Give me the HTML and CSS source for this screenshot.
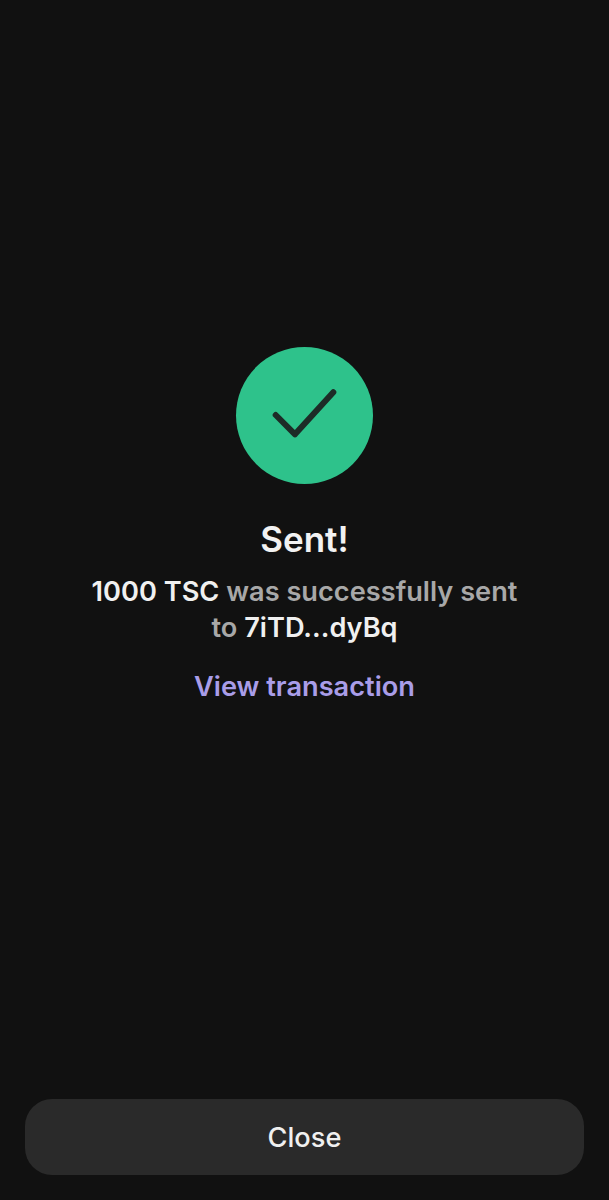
FILE: index.html
```html
<!DOCTYPE html>
<html lang="en">
<head>
  <meta charset="UTF-8">
  <title>Sent</title>
  <link rel="stylesheet" href="styles.css">
</head>
<body>
  <main class="screen">
    <section class="result">
      <div class="result-icon">
        <svg width="137" height="137" viewBox="0 0 137 137" fill="none">
          <path d="M39.7 68 L59 87.3 L97.3 45.3" stroke="#1d2b27" stroke-width="6" stroke-linecap="round" stroke-linejoin="round"/>
        </svg>
      </div>
      <h1 class="result-title">Sent!</h1>
      <p class="result-text"><b>1000 TSC</b> was successfully sent<br>to <b>7iTD...dyBq</b></p>
      <a class="result-link" href="#">View transaction</a>
    </section>
    <button class="close-btn" type="button">Close</button>
  </main>
</body>
</html>
```

FILE: styles.css
```css
* { box-sizing: border-box; }
html, body { margin: 0; height: 100%; }
body { background-color: #111111; font-family: Inter, "Noto Sans", sans-serif; }

.screen { height: 1200px; display: flex; flex-direction: column; justify-content: space-between; padding: 347px 25px 25px; }

.result { display: flex; flex-direction: column; align-items: center; text-align: center; }
.result-icon { width: 137px; height: 137px; border-radius: 50%; background-color: #2ec28b; }
.result-icon svg { display: block; }
.result-title { margin: 33px 0 0; font-size: 35px; line-height: 44px; font-weight: 600; color: #f2f2f2; }
.result-text { margin: 13px 0 0; font-size: 27.2px; line-height: 36px; font-weight: 600; color: #a8a8a8; }
.result-text b { font-weight: 600; color: #f0f0f0; }
.result-link { margin-top: 23px; font-size: 27.2px; line-height: 36px; font-weight: 600; color: #a99de8; text-decoration: none; }

.close-btn { width: 559px; height: 76px; border: none; border-radius: 27px; background-color: #2a2a2a; color: #f0f0f0; font-family: inherit; font-size: 27.2px; font-weight: 500; cursor: pointer; }
```
